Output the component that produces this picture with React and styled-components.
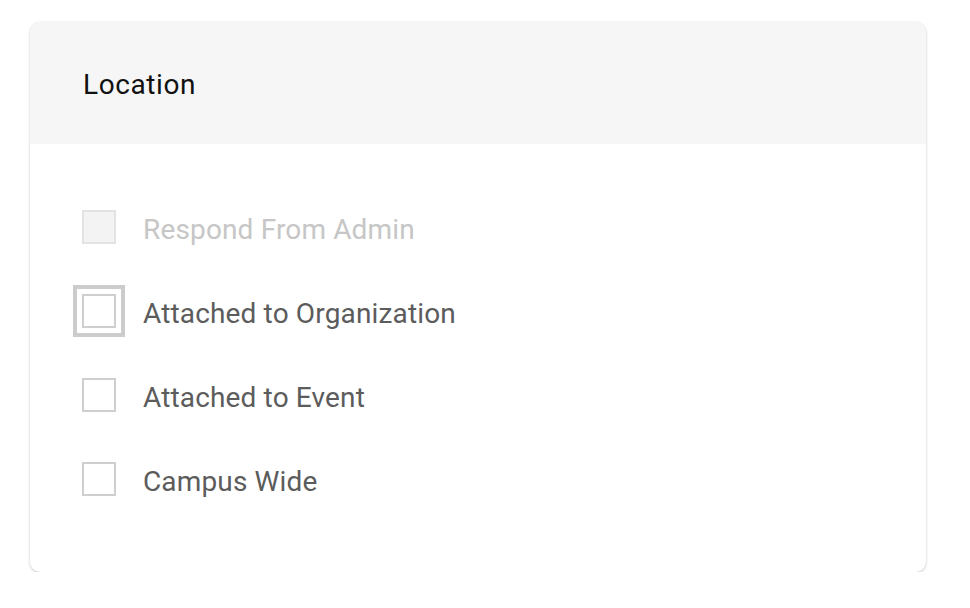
import React from "react";
import styled, { createGlobalStyle, css } from "styled-components";

const Global = createGlobalStyle`
  html, body { margin: 0; padding: 0; background: #fff; }
  body { font-family: Roboto, "Noto Sans", Arial, sans-serif; }
`;

const Page = styled.div`
  padding: 22px 44px 0 30px;
`;

const Card = styled.section`
  background: #fff;
  border-radius: 10px;
  box-shadow: 0 1px 3px rgba(0, 0, 0, 0.2), 0 0 1px rgba(0, 0, 0, 0.1);
  overflow: hidden;
`;

const Header = styled.header`
  height: 122px;
  background: #f6f6f6;
  display: flex;
  align-items: center;
  padding-left: 53px;
  box-sizing: border-box;
`;

const Title = styled.h2`
  margin: 0;
  font-family: Roboto, sans-serif;
  font-weight: 400;
  font-size: 28px;
  letter-spacing: 0.6px;
  color: #111;
  padding-top: 2px;
`;

const Body = styled.div`
  padding: 66px 52px 76px 52px;
  display: flex;
  flex-direction: column;
  gap: 50px;
`;

const Row = styled.label`
  display: flex;
  align-items: center;
  gap: 27px;
  height: 34px;
  cursor: ${(p) => (p.$disabled ? "default" : "pointer")};
`;

const Box = styled.span`
  width: 34px;
  height: 34px;
  box-sizing: border-box;
  border: 2px solid #cfcfcf;
  background: #fff;
  flex: none;
  ${(p) =>
    p.$disabled &&
    css`
      background: #f3f3f3;
      border-color: #e3e3e3;
    `}
  ${(p) =>
    p.$focused &&
    css`
      box-shadow: 0 0 0 5px #fff, 0 0 0 9px #cccccc;
    `}
`;

const Label = styled.span`
  font-family: Roboto, sans-serif;
  font-size: 28px;
  letter-spacing: 0.15px;
  color: ${(p) => (p.$disabled ? "#c6c6c6" : "#5c5c5c")};
  padding-top: 4px;
`;

const options = [
  { label: "Respond From Admin", disabled: true },
  { label: "Attached to Organization", focused: true },
  { label: "Attached to Event" },
  { label: "Campus Wide" },
];

export default function App() {
  return (
    <>
      <Global />
      <Page>
        <Card>
          <Header>
            <Title>Location</Title>
          </Header>
          <Body>
            {options.map((o) => (
              <Row key={o.label} $disabled={o.disabled}>
                <Box $disabled={o.disabled} $focused={o.focused} />
                <Label $disabled={o.disabled}>{o.label}</Label>
              </Row>
            ))}
          </Body>
        </Card>
      </Page>
    </>
  );
}
